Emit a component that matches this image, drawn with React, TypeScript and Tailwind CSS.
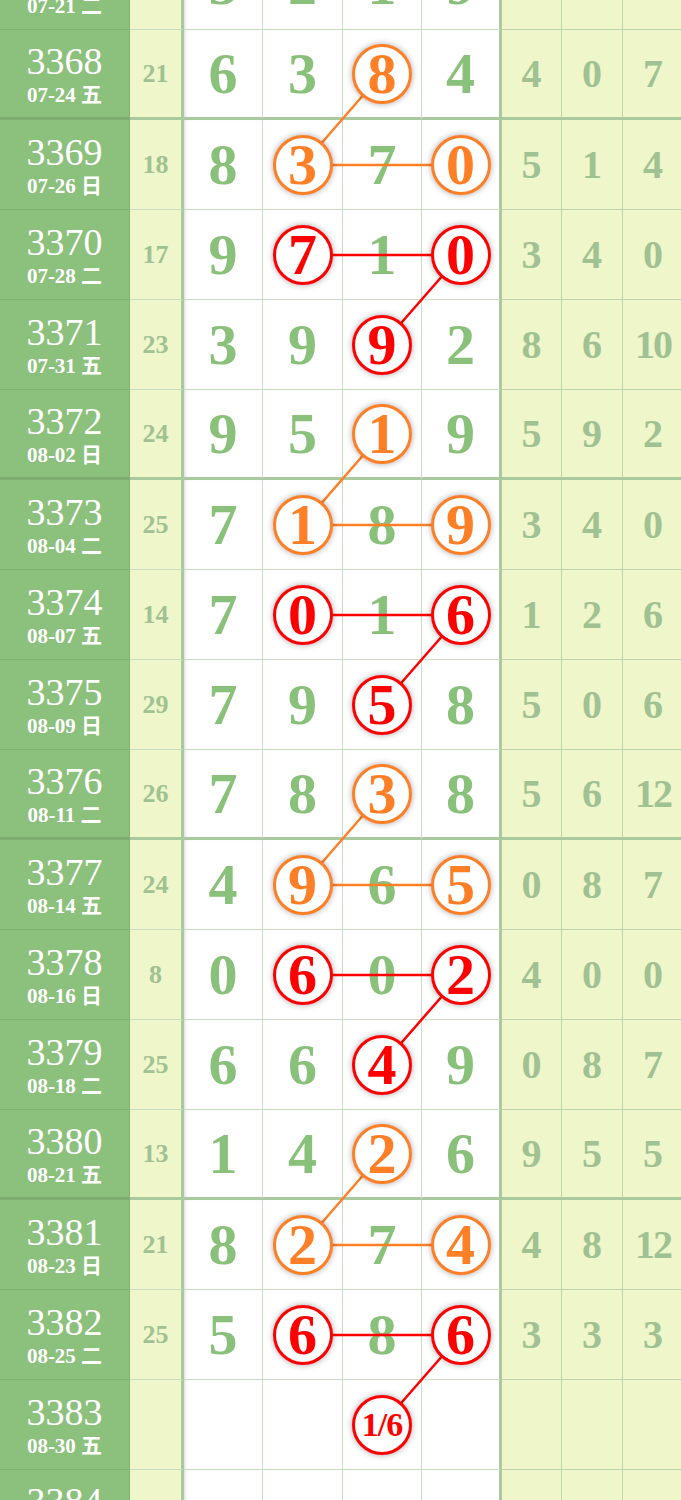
import React from 'react';

type Mark = { col: number; color: 'orange' | 'red'; text?: string };

type RowData = {
    period: number;
    date: string;
    sum?: number;
    nums?: number[];
    right?: number[];
};

const rows: RowData[] = [
    { period: 3367, date: '07-21 二', sum: 19, nums: [5, 2, 1, 9], right: [2, 3, 5] },
    { period: 3368, date: '07-24 五', sum: 21, nums: [6, 3, 8, 4], right: [4, 0, 7] },
    { period: 3369, date: '07-26 日', sum: 18, nums: [8, 3, 7, 0], right: [5, 1, 4] },
    { period: 3370, date: '07-28 二', sum: 17, nums: [9, 7, 1, 0], right: [3, 4, 0] },
    { period: 3371, date: '07-31 五', sum: 23, nums: [3, 9, 9, 2], right: [8, 6, 10] },
    { period: 3372, date: '08-02 日', sum: 24, nums: [9, 5, 1, 9], right: [5, 9, 2] },
    { period: 3373, date: '08-04 二', sum: 25, nums: [7, 1, 8, 9], right: [3, 4, 0] },
    { period: 3374, date: '08-07 五', sum: 14, nums: [7, 0, 1, 6], right: [1, 2, 6] },
    { period: 3375, date: '08-09 日', sum: 29, nums: [7, 9, 5, 8], right: [5, 0, 6] },
    { period: 3376, date: '08-11 二', sum: 26, nums: [7, 8, 3, 8], right: [5, 6, 12] },
    { period: 3377, date: '08-14 五', sum: 24, nums: [4, 9, 6, 5], right: [0, 8, 7] },
    { period: 3378, date: '08-16 日', sum: 8, nums: [0, 6, 0, 2], right: [4, 0, 0] },
    { period: 3379, date: '08-18 二', sum: 25, nums: [6, 6, 4, 9], right: [0, 8, 7] },
    { period: 3380, date: '08-21 五', sum: 13, nums: [1, 4, 2, 6], right: [9, 5, 5] },
    { period: 3381, date: '08-23 日', sum: 21, nums: [8, 2, 7, 4], right: [4, 8, 12] },
    { period: 3382, date: '08-25 二', sum: 25, nums: [5, 6, 8, 6], right: [3, 3, 3] },
    { period: 3383, date: '08-30 五' },
    { period: 3384, date: '09-01 日' },
];

// circles follow a 4-row cycle: orange top, orange pair, red pair, red bottom
function marksFor(row: RowData): Mark[] {
    if (row.period === 3383) return [{ col: 2, color: 'red', text: '1/6' }];
    if (!row.nums || row.period < 3368) return [];
    const k = row.period % 4;
    if (k === 0) return [{ col: 2, color: 'orange' }];
    if (k === 1) return [{ col: 1, color: 'orange' }, { col: 3, color: 'orange' }];
    if (k === 2) return [{ col: 1, color: 'red' }, { col: 3, color: 'red' }];
    return [{ col: 2, color: 'red' }];
}

const ROW_H = 90;
const colX = [223, 302.5, 382, 460.5];

function centerY(i: number) {
    const thick = rows[i].period % 4 === 0;
    return i * ROW_H + (thick ? 43.5 : 45);
}

function Circle({ mark, value }: { mark: Mark; value: string }) {
    const ring =
        mark.color === 'orange'
            ? 'border-[#ff7f27] text-[#ff7f27]'
            : 'border-[#ff0000] text-[#ff0000]';
    return (
        <div
            className={`relative z-20 flex h-[60px] w-[60px] items-center justify-center rounded-full border-[3px] bg-white shadow-[0_0_6px_rgba(0,0,0,0.35)] ${ring}`}
        >
            {mark.text ? (
                <span className="text-[34px] leading-none tracking-[-1px]">{mark.text}</span>
            ) : (
                <span className="text-[58px] leading-none">{value}</span>
            )}
        </div>
    );
}

function Row({ row }: { row: RowData }) {
    const thick = row.period % 4 === 0;
    const bb = thick ? 'border-b-[3px] border-b-[#aac99f]' : 'border-b border-b-[#c9ddc2]';
    const bbPeriod = thick ? 'border-b-[3px] border-b-[#7dae6f]' : 'border-b border-b-[#7fb172]';
    const marks = marksFor(row);
    const digitW = [
        'w-[79px] border-r border-r-[#c9ddc2] shadow-[inset_3px_0_4px_-3px_rgba(0,0,0,0.25)]',
        'w-[80px] border-r border-r-[#c9ddc2]',
        'w-[79px] border-r border-r-[#c9ddc2]',
        'w-[80px] border-r-[3px] border-r-[#aac99f]',
    ];
    const rightW = ['w-[60px]', 'w-[61px]', 'w-[61px]'];

    return (
        <div className="flex h-[90px]">
            <div className={`flex w-[130px] shrink-0 flex-col items-center justify-center border-r border-r-[#80b272] bg-[#8cc07d] text-white ${bbPeriod}`}>
                <span className="text-[38px] leading-none">{row.period}</span>
                <span className="mt-[5px] text-[21px] font-bold leading-none">{row.date}</span>
            </div>
            <div className={`flex w-[54px] shrink-0 items-center justify-center border-r-[3px] border-r-[#aac99f] bg-[#eef6ca] text-[26px] font-bold leading-none text-[#a0c191] ${bb}`}>
                {row.nums ? row.sum : ''}
            </div>
            {digitW.map((w, c) => {
                const mark = marks.find((m) => m.col === c);
                const value = row.nums ? String(row.nums[c]) : '';
                return (
                    <div key={c} className={`flex shrink-0 items-center justify-center bg-white font-bold text-[#89c17a] ${w} ${bb}`}>
                        {mark ? (
                            <Circle mark={mark} value={value} />
                        ) : (
                            <span className="text-[58px] leading-none">{value}</span>
                        )}
                    </div>
                );
            })}
            {rightW.map((w, c) => (
                <div key={c} className={`flex shrink-0 items-center justify-center border-r border-r-[#bcd3ab] bg-[#eef6ca] text-[40px] font-bold leading-none text-[#a0c191] ${w} ${thick ? 'border-b-[3px] border-b-[#aac99f]' : 'border-b border-b-[#bcd3ab]'}`}>
                    <span className={row.right && row.right[c] >= 10 ? 'tracking-[-2px]' : ''}>{row.right ? row.right[c] : ''}</span>
                </div>
            ))}
        </div>
    );
}

export default function App() {
    const lines: { x1: number; y1: number; x2: number; y2: number; color: string }[] = [];
    rows.forEach((row, i) => {
        const k = row.period % 4;
        if (!row.nums || row.period < 3368) return;
        if (k === 0 && i + 1 < rows.length) {
            lines.push({ x1: colX[2], y1: centerY(i), x2: colX[1], y2: centerY(i + 1), color: '#ff7f27' });
        }
        if (k === 1) {
            lines.push({ x1: colX[1], y1: centerY(i), x2: colX[3], y2: centerY(i), color: '#ff7f27' });
        }
        if (k === 2) {
            lines.push({ x1: colX[1], y1: centerY(i), x2: colX[3], y2: centerY(i), color: '#ff0000' });
            lines.push({ x1: colX[3], y1: centerY(i), x2: colX[2], y2: centerY(i + 1), color: '#ff0000' });
        }
    });

    return (
        <div className="h-[1500px] w-[681px] overflow-hidden bg-white font-['Liberation_Serif','Noto_Sans_CJK_SC',serif]">
            <div className="relative -mt-[60px] w-[686px]">
                {rows.map((row) => (
                    <Row key={row.period} row={row} />
                ))}
                <svg
                    className="pointer-events-none absolute left-0 top-0 z-10"
                    width={686}
                    height={rows.length * ROW_H}
                >
                    {lines.map((l, idx) => (
                        <line key={idx} x1={l.x1} y1={l.y1} x2={l.x2} y2={l.y2} stroke={l.color} strokeWidth={2.5} />
                    ))}
                </svg>
            </div>
        </div>
    );
}
